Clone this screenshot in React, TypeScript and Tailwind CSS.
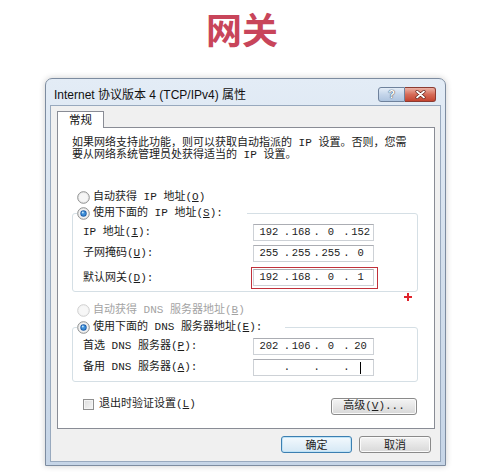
import React from 'react';

const mono = "font-['Liberation_Mono','Noto_Sans_CJK_SC',monospace]";

const Radio = ({ checked = false, disabled = false }: { checked?: boolean; disabled?: boolean }) => (
  <svg width="13" height="13" viewBox="0 0 13 13" className="shrink-0">
    <circle cx="6.5" cy="6.5" r="5.8" fill={disabled ? '#f4f4f4' : '#ececec'} stroke={disabled ? '#cfcfcf' : '#8e8f8f'} strokeWidth="1" />
    <circle cx="6.5" cy="6.5" r="4.3" fill={disabled ? '#f7f7f7' : '#f6f6f6'} />
    {checked && (
      <>
        <circle cx="6.5" cy="6.5" r="3.2" fill="#1f5ea8" />
        <circle cx="6.5" cy="6.5" r="2.3" fill="#3d8fd9" />
        <circle cx="5.8" cy="5.6" r="1" fill="#bfe3fb" />
      </>
    )}
  </svg>
);

const IpBox = ({ parts, cursor = false }: { parts: string[]; cursor?: boolean }) => (
  <div className={`flex h-[17px] w-[121px] items-center border border-[#cdd1d6] border-t-[#abadb3] bg-white text-[10.5px] text-[#222] ${mono}`}>
    {parts.map((p, i) => (
      <div key={i} className="flex flex-1 items-center">
        {i > 0 && <span className="w-[5px] text-center">.</span>}
        <span className="flex flex-1 justify-center">
          {p}
          {cursor && i === 3 && <span className="inline-block h-[12px] w-px bg-black" />}
        </span>
      </div>
    ))}
  </div>
);

const Btn = ({ children, primary = false, w }: { children: React.ReactNode; primary?: boolean; w: string }) => (
  <div
    className={`flex h-[17px] items-center justify-center rounded-[3px] border text-[11px] text-[#1e1e1e] ${w} ${
      primary
        ? 'border-[#3c7fb1] bg-gradient-to-b from-[#f3f9fd] to-[#d5e8f5] shadow-[inset_0_0_0_1px_#bfe3f7]'
        : 'border-[#8a8a8a] bg-gradient-to-b from-[#f4f4f4] to-[#d8d8d8] shadow-[inset_0_0_0_1px_#fbfbfb]'
    }`}
  >
    {children}
  </div>
);

const Row = ({ label, children, w = 'w-[170px]' }: { label: React.ReactNode; children: React.ReactNode; w?: string }) => (
  <div className="flex items-center">
    <div className={`${w} shrink-0`}>{label}</div>
    {children}
  </div>
);

export default function App() {
  return (
    <div className="h-[472px] w-[500px] overflow-hidden bg-white font-['Noto_Sans_CJK_SC',sans-serif]">
      <div className="h-[78px] pt-[8px]">
        <h1 className="pr-[16px] text-center text-[36px] font-bold leading-[40px] text-[#c8455a]">网关</h1>
      </div>

      <div className="ml-[45px] flex h-[388px] w-[401px] flex-col rounded-t-[7px] border border-[#7d8ca0] bg-gradient-to-b from-[#e3ecf6] via-[#d3dfec] to-[#c6d5e7] shadow-[0_0_6px_rgba(0,0,0,0.2)]">
        {/* title bar */}
        <div className="flex h-[26px] shrink-0 items-start justify-between">
          <div className="pl-[8px] pt-[9px] font-['Liberation_Sans','Noto_Sans_CJK_SC',sans-serif] text-[12px] leading-[14px] text-[#111]">
            Internet 协议版本 4 (TCP/IPv4) 属性
          </div>
          <div className="mr-[9px] mt-[8px] flex">
            <div className="flex h-[15px] w-[27px] items-center justify-center rounded-l-[3px] border border-[#6f829c] bg-gradient-to-b from-[#e4edf7] via-[#c4d5ea] to-[#aec4df] font-['Liberation_Sans',sans-serif] text-[11px] font-bold leading-none text-white [text-shadow:0_0_1px_#2b3d55,0_0_1px_#2b3d55]">
              ?
            </div>
            <div className="flex h-[15px] w-[31px] items-center justify-center rounded-r-[3px] border border-l-0 border-[#8b3b32] bg-gradient-to-b from-[#eab1a5] via-[#d66b58] to-[#c4432f]">
              <svg width="11" height="9" viewBox="0 0 11 9">
                <path d="M2 1.5 L9 7.5 M9 1.5 L2 7.5" stroke="#5a1a12" strokeWidth="3" strokeLinecap="round" />
                <path d="M2 1.5 L9 7.5 M9 1.5 L2 7.5" stroke="#ffffff" strokeWidth="1.8" strokeLinecap="round" />
              </svg>
            </div>
          </div>
        </div>

        {/* client area */}
        <div className="ml-[4px] flex h-[357px] w-[391px] flex-col border border-[#98a9be] bg-[#f0f0f0]">
          <div className="relative z-10 -mb-px ml-[6px] mt-[5px] flex h-[17px] w-[47px] items-center justify-center border border-b-0 border-[#898c95] bg-white text-[11.5px] text-[#111]">
            常规
          </div>
          <div className={`relative ml-[6px] flex h-[302px] w-[378px] flex-col border border-[#898c95] bg-white text-[11px] text-[#1b1b1b] ${mono}`}>
            <svg width="8" height="8" viewBox="0 0 8 8" className="absolute left-[346px] top-[165px]">
              <path d="M4 0 V8 M0 4 H8" stroke="#e0242c" strokeWidth="2" />
            </svg>

            <div className="pl-[14px] pt-[9px] leading-[12px]">
              <div>如果网络支持此功能，则可以获取自动指派的 IP 设置。否则，您需</div>
              <div>要从网络系统管理员处获得适当的 IP 设置。</div>
            </div>

            <div className="ml-[19px] mt-[29px] flex h-[14px] items-center gap-[3px]">
              <Radio />
              <span>自动获得 IP 地址(<u>O</u>)</span>
            </div>

            <div className="relative ml-[14px] mt-[9px] h-[79px] w-[346px] rounded-[3px] border border-[#d5dfe5] pl-[10px] pt-[10px]">
              <div className="absolute left-[4px] top-[-8px] flex h-[14px] w-[170px] items-center gap-[3px] bg-white">
                <Radio checked />
                <span>使用下面的 IP 地址(<u>S</u>):</span>
              </div>
              <Row label={<>IP 地址(<u>I</u>):</>}>
                <IpBox parts={['192', '168', '0', '152']} />
              </Row>
              <div className="mt-[4px]">
                <Row label={<>子网掩码(<u>U</u>):</>}>
                  <IpBox parts={['255', '255', '255', '0']} />
                </Row>
              </div>
              <div className="mt-[5px]">
                <Row label={<>默认网关(<u>D</u>):</>} w="w-[168px]">
                  <div className="h-[22px] w-[127px] border border-[#c0303a] pl-[1px] pt-[1px]">
                    <IpBox parts={['192', '168', '0', '1']} />
                  </div>
                </Row>
              </div>
            </div>

            <div className="ml-[19px] mt-[11px] flex h-[14px] items-center gap-[3px] text-[#a3a3a3]">
              <Radio disabled />
              <span>自动获得 DNS 服务器地址(<u>B</u>)</span>
            </div>

            <div className="relative ml-[14px] mt-[10px] h-[55px] w-[346px] rounded-[3px] border border-[#d5dfe5] pl-[10px] pt-[10px]">
              <div className="absolute left-[4px] top-[-8px] flex h-[14px] w-[208px] items-center gap-[3px] bg-white">
                <Radio checked />
                <span>使用下面的 DNS 服务器地址(<u>E</u>):</span>
              </div>
              <Row label={<>首选 DNS 服务器(<u>P</u>):</>}>
                <IpBox parts={['202', '106', '0', '20']} />
              </Row>
              <div className="mt-[4px]">
                <Row label={<>备用 DNS 服务器(<u>A</u>):</>}>
                  <IpBox parts={['', '', '', '']} cursor />
                </Row>
              </div>
            </div>

            <div className="mt-[16px] flex items-start justify-between pl-[25px] pr-[17px]">
              <div className="flex h-[12px] items-center gap-[5px]">
                <div className="h-[11px] w-[11px] border border-[#8f8f8f] bg-gradient-to-br from-[#dcdcdc] to-[#f6f6f6] shadow-[inset_0_0_0_1px_#f4f4f4]" />
                <span>退出时验证设置(<u>L</u>)</span>
              </div>
              <Btn w="w-[86px]">
                <span>高级(<u>V</u>)...</span>
              </Btn>
            </div>
          </div>

          <div className="mt-[7px] flex justify-end gap-[7px] pr-[9px]">
            <Btn primary w="w-[71px]">确定</Btn>
            <Btn w="w-[72px]">取消</Btn>
          </div>
        </div>
      </div>
    </div>
  );
}
